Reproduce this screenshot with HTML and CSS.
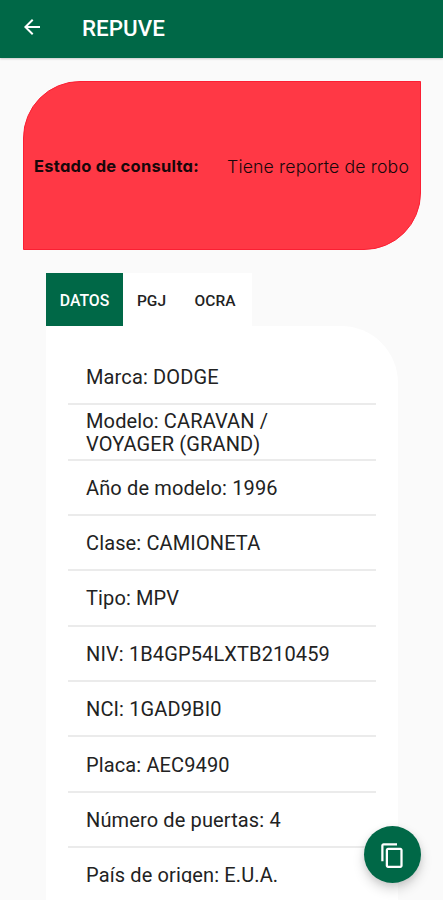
FILE: index.html
```html
<!DOCTYPE html>
<html lang="es">
<head>
<meta charset="utf-8">
<meta name="viewport" content="width=device-width, initial-scale=1">
<title>REPUVE</title>
<link rel="stylesheet" href="styles.css">
</head>
<body>
<header class="appbar">
  <svg class="back" viewBox="0 0 24 24" aria-hidden="true"><path d="M20 11H7.83l5.59-5.59L12 4l-8 8 8 8 1.41-1.41L7.83 13H20v-2z"/></svg>
  <h1 class="title"><span>REPUVE</span></h1>
</header>
<main class="content">
  <section class="status">
    <span class="status-label">Estado de consulta:</span>
    <span class="status-value">Tiene reporte de robo</span>
  </section>
  <section class="details">
    <nav class="tabs">
      <span class="tab tab-active"><span>DATOS</span></span>
      <span class="tab tab-pgj"><span>PGJ</span></span>
      <span class="tab tab-ocra"><span>OCRA</span></span>
    </nav>
    <div class="card">
      <ul class="list">
        <li class="row"><span>Marca: DODGE</span></li>
        <li class="row"><span>Modelo: CARAVAN /<br>VOYAGER (GRAND)</span></li>
        <li class="row"><span>Año de modelo: 1996</span></li>
        <li class="row"><span>Clase: CAMIONETA</span></li>
        <li class="row"><span>Tipo: MPV</span></li>
        <li class="row"><span>NIV: 1B4GP54LXTB210459</span></li>
        <li class="row"><span>NCI: 1GAD9BI0</span></li>
        <li class="row"><span>Placa: AEC9490</span></li>
        <li class="row"><span>Número de puertas: 4</span></li>
        <li class="row"><span>País de origen: E.U.A.</span></li>
      </ul>
    </div>
  </section>
</main>
<button class="fab" aria-label="Copiar">
  <svg viewBox="0 0 24 24" aria-hidden="true"><path d="M16 1H4c-1.1 0-2 .9-2 2v14h2V3h12V1zm3 4H8c-1.1 0-2 .9-2 2v14c0 1.1.9 2 2 2h11c1.1 0 2-.9 2-2V7c0-1.1-.9-2-2-2zm0 16H8V7h11v14z"/></svg>
</button>
</body>
</html>
```

FILE: styles.css
```css
* { box-sizing: border-box; }
body {
  margin: 0;
  height: 900px;
  overflow: hidden;
  position: relative;
  display: flex;
  flex-direction: column;
  background: #fafafa;
  color: #222;
  font-family: Roboto, "Liberation Sans", sans-serif;
}
.appbar {
  flex: none;
  height: 58px;
  display: flex;
  align-items: center;
  padding: 0 0 4px 20px;
  background: #006847;
  color: #fff;
  box-shadow: 0 1px 2px rgba(0, 0, 0, .2);
}
.back { width: 24px; height: 24px; fill: #fff; }
.title { margin: 2px 0 0 38px; font-size: 22.4px; font-weight: 500; line-height: 26px; }
.content { flex: 1; min-height: 0; display: flex; flex-direction: column; padding: 23px 22px 0 23px; }
.status {
  flex: none;
  height: 169px;
  display: flex;
  align-items: center;
  justify-content: space-between;
  padding: 1px 11px 0 10px;
  background: #ff3845;
  border: 1px solid #fb1f33;
  border-radius: 57px 0 57px 0;
  color: #18070a;
  font-family: Inter, "Liberation Sans", sans-serif;
  font-feature-settings: "cv11";
  font-size: 17px;
  white-space: nowrap;
}
.status-label { font-size: 16.5px; font-weight: 700; letter-spacing: .25px; }
.status-value { font-size: 17.7px; font-weight: 300; letter-spacing: .13px; }
.details { flex: 1; min-height: 0; display: flex; flex-direction: column; margin: 23px 23px 0; }
.tabs { flex: none; display: flex; width: 206px; height: 53px; background: #fff; }
.tab { display: flex; align-items: center; justify-content: center; font-size: 15.5px; font-weight: 500; padding-top: 2px; }
.tab-active { width: 77px; background: #006847; color: #fff; font-size: 15.8px; }
.tab-pgj { width: 57px; }
.tab-ocra { width: 70px; }
.card { flex: 1; min-height: 0; padding: 24px 22px 17px; background: #fff; border-radius: 0 57px 0 0; }
.list { margin: 0; padding: 0; height: 100%; overflow: hidden; list-style: none; }
.row {
  height: 55.35px;
  display: flex;
  align-items: center;
  padding: 2.4px 18px 0;
  border-bottom: 2px solid #ebebeb;
  font-size: 20px;
  letter-spacing: .13px;
  line-height: 23.5px;
  white-space: nowrap;
}
.fab {
  position: absolute;
  right: 22px;
  bottom: 17px;
  width: 57px;
  height: 57px;
  display: flex;
  align-items: center;
  justify-content: center;
  padding: 2px 0 0;
  border: 0;
  border-radius: 50%;
  background: #006847;
  box-shadow: 0 6px 12px rgba(0, 0, 0, .17), 0 2px 6px rgba(0, 0, 0, .08);
}
.fab svg { width: 27px; height: 27px; fill: #fff; }
```
